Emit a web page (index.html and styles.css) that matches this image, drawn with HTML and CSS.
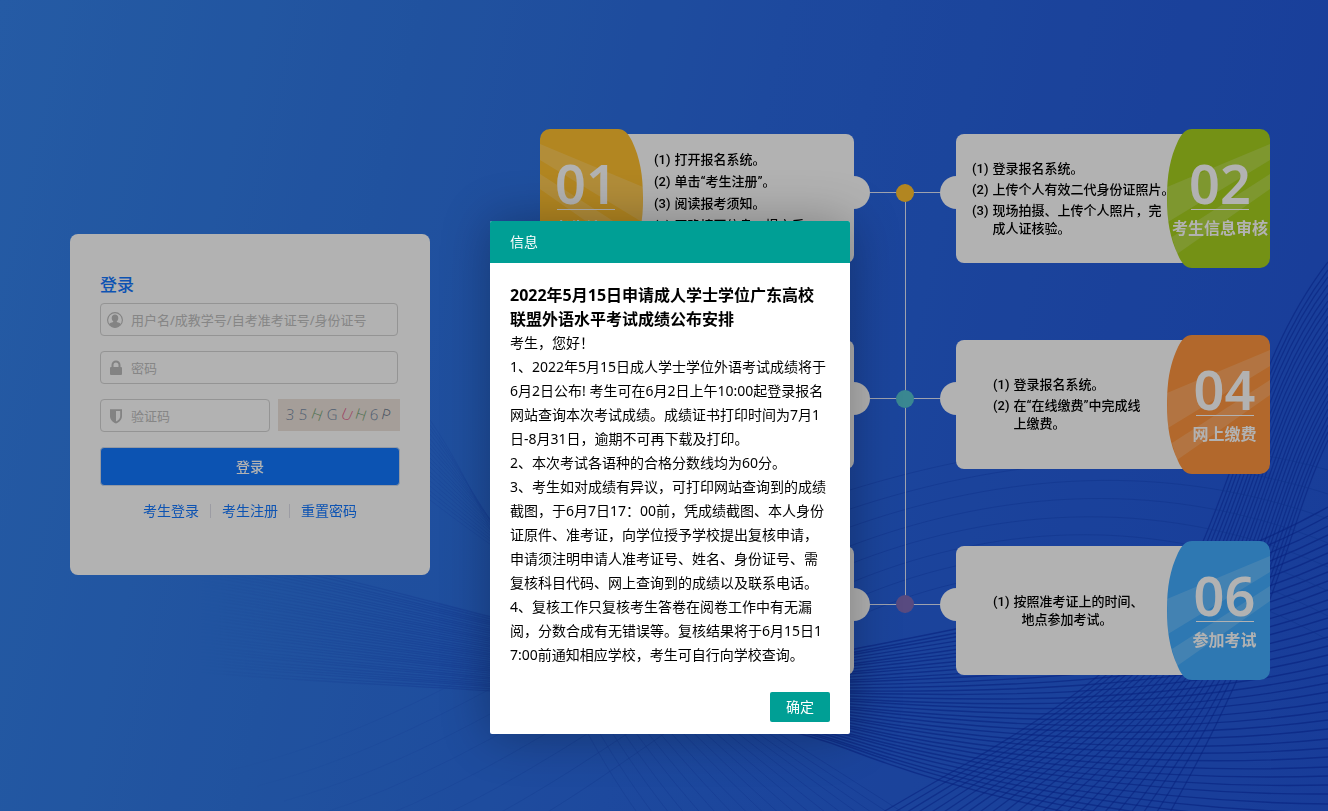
FILE: index.html
```html
<!DOCTYPE html>
<html lang="zh-CN">
<head>
<meta charset="utf-8">
<title>登录</title>
<link rel="stylesheet" href="styles.css">
</head>
<body>
<svg class="waves" id="waves" viewBox="0 0 1328 811" preserveAspectRatio="none" aria-hidden="true"></svg>

<svg class="defs" aria-hidden="true">
  <defs>
    <symbol id="tab" viewBox="0 0 103 139">
      <path fill="currentColor" d="M25 0H93a10 10 0 0 1 10 10V129a10 10 0 0 1-10 10H25C19 139 15 135 11 126C3 109 0 92 0 69C0 46 3 29 11 12C15 4 19 0 25 0Z"/>
      <path fill="#fff" fill-opacity=".17" d="M103 15V31L1 93L0 58ZM103 45V60L10 125L5 108Z"/>
    </symbol>
  </defs>
</svg>

<main class="page">
  <form class="login">
    <h1 class="login-title">登录</h1>
    <div class="field">
      <svg class="icon" viewBox="0 0 16 16" aria-hidden="true"><circle cx="8" cy="8" r="7.4" fill="none" stroke="#bcbcbc" stroke-width="1.1"/><path fill="#bcbcbc" d="M8 2.6c2 0 3.3 1.5 3.3 3.5 0 1.4-.6 2.6-1.5 3.2v.7c1.9.5 3.2 1 3.9 2C12.500 14.300 10.500 15.500 8 15.500S3.500 14.300 2.300 12c.7-1 2-1.500 3.900-2v-.7c-.9-.6-1.500-1.800-1.500-3.200 0-2 1.300-3.500 3.300-3.500Z"/></svg>
      <input type="text" aria-label="用户名" placeholder="用户名/成教学号/自考准考证号/身份证号">
    </div>
    <div class="field">
      <svg class="icon" viewBox="0 0 16 16" aria-hidden="true"><path fill="none" stroke="#bcbcbc" stroke-width="2" d="M5.500 8V5a3.500 3.500 0 0 1 7 0v3"/><rect x="3" y="7" width="12" height="8" rx="1" fill="#bcbcbc"/></svg>
      <input type="password" aria-label="密码" placeholder="密码">
    </div>
    <div class="field-row">
      <div class="field">
        <svg class="icon" viewBox="0 0 16 16" aria-hidden="true"><path fill="#bcbcbc" fill-rule="evenodd" d="M3 1.200H15V8c0 3.500-2.500 6-6 7.600C5.500 14 3 11.500 3 8ZM9 3v10.600c2.500-1.300 4.200-3 4.200-5.600V3Z"/></svg>
        <input type="text" aria-label="验证码" placeholder="验证码">
      </div>
      <svg class="captcha" viewBox="0 0 122 32" role="img" aria-label="35HGUH6P">
        <g text-anchor="middle">
          <text x="12" y="21" fill="#7187a3" transform="rotate(6 12 16)">3</text>
          <text x="25" y="21" fill="#7187a3" transform="rotate(6 25 16)">5</text>
          <text x="39" y="21" fill="#75a578" transform="rotate(20 39 16)">H</text>
          <text x="54" y="21" fill="#7187a3" transform="rotate(2 54 16)">G</text>
          <text x="69" y="21" fill="#e05a8c" transform="rotate(24 69 16)">U</text>
          <text x="83" y="21" fill="#75a578" transform="rotate(18 83 16)">H</text>
          <text x="96" y="21" fill="#7187a3" transform="rotate(4 96 16)">6</text>
          <text x="108" y="21" fill="#65758a" transform="rotate(14 108 16)">P</text>
        </g>
      </svg>
    </div>
    <button class="login-button" type="button">登录</button>
    <nav class="links">
      <a href="#">考生登录</a>
      <a href="#">考生注册</a>
      <a href="#">重置密码</a>
    </nav>
  </form>

  <section class="steps">
    <article class="step step-left amber">
      <div class="tab"><svg class="tab-shape"><use href="#tab"/></svg><strong>01</strong><span>考生注册</span></div>
      <ol>
        <li><b>(1)</b><span>打开报名系统。</span></li>
        <li><b>(2)</b><span>单击“考生注册”。</span></li>
        <li><b>(3)</b><span>阅读报考须知。</span></li>
        <li><b>(4)</b><span>正确填写信息，提交后</span></li>
      </ol>
    </article>
    <svg class="spine" viewBox="0 0 102 551" aria-hidden="true">
      <path d="M51.500 64V475M16 63.500H86M16 269.500H86M16 475.500H86" stroke="#e3e9fa" fill="none"/>
      <circle cx="51" cy="64" r="9" fill="#ffc130"/>
      <circle cx="51" cy="270" r="9" fill="#53c2d0"/>
      <circle cx="51" cy="475" r="9" fill="#7e6bb8"/>
    </svg>
    <article class="step step-right lime">
      <ol>
        <li><b>(1)</b><span>登录报名系统。</span></li>
        <li><b>(2)</b><span>上传个人有效二代身份证照片。</span></li>
        <li><b>(3)</b><span>现场拍摄、上传个人照片，完<br>成人证核验。</span></li>
      </ol>
      <div class="tab"><svg class="tab-shape"><use href="#tab"/></svg><strong>02</strong><span>考生信息审核</span></div>
    </article>
    <article class="step step-left"></article>
    <article class="step step-right orange inset">
      <ol>
        <li><b>(1)</b><span>登录报名系统。</span></li>
        <li><b>(2)</b><span>在“在线缴费”中完成线<br>上缴费。</span></li>
      </ol>
      <div class="tab"><svg class="tab-shape"><use href="#tab"/></svg><strong>04</strong><span>网上缴费</span></div>
    </article>
    <article class="step step-left"></article>
    <article class="step step-right sky inset">
      <ol>
        <li><b>(1)</b><span>按照准考证上的时间、<span class="indent">地点参加考试。</span></span></li>
      </ol>
      <div class="tab"><svg class="tab-shape"><use href="#tab"/></svg><strong>06</strong><span>参加考试</span></div>
    </article>
  </section>
</main>

<div class="shade"></div>
<dialog class="modal" open aria-labelledby="modal-title">
  <header class="modal-head" id="modal-title">信息</header>
  <div class="modal-body">
    <h2>2022年5月15日申请成人学士学位广东高校联盟外语水平考试成绩公布安排</h2>
    <p>考生，您好！</p>
    <p>1、2022年5月15日成人学士学位外语考试成绩将于6月2日公布! 考生可在6月2日上午10:00起登录报名网站查询本次考试成绩。成绩证书打印时间为7月1日-8月31日，逾期不可再下载及打印。</p>
    <p>2、本次考试各语种的合格分数线均为60分。</p>
    <p>3、考生如对成绩有异议，可打印网站查询到的成绩截图，于6月7日17：00前，凭成绩截图、本人身份证原件、准考证，向学位授予学校提出复核申请，申请须注明申请人准考证号、姓名、身份证号、需复核科目代码、网上查询到的成绩以及联系电话。</p>
    <p>4、复核工作只复核考生答卷在阅卷工作中有无漏阅，分数合成有无错误等。复核结果将于6月15日17:00前通知相应学校，考生可自行向学校查询。</p>
  </div>
  <footer class="modal-foot"><button type="button">确定</button></footer>
</dialog>
<script src="waves.js"></script>
</body>
</html>
```

FILE: styles.css
```css
* { box-sizing: border-box; }

body {
  margin: 0;
  min-height: 100vh;
  font-family: "Noto Sans", "Noto Sans CJK SC", sans-serif;
  font-size: 14px;
  line-height: 24px;
  color: #000;
  background: linear-gradient(103deg, #3583ec 0%, #2f76e4 28%, #2a69e2 52%, #2760df 72%, #2357dc 100%);
}

h1, h2, p, ol { margin: 0; padding: 0; }

.waves { position: fixed; inset: 0; width: 100%; height: 100%; }
.waves path { fill: none; }
.defs { position: absolute; width: 0; height: 0; }

.page {
  position: relative;
  min-height: 100vh;
  padding: 0 58px 2px 70px;
  display: flex;
  align-items: center;
  justify-content: space-between;
}

/* Login card */
.login {
  width: 360px;
  padding: 39px 30px 52px;
  border-radius: 8px;
  background: #fff;
}
.login-title {
  margin-bottom: 6px;
  font-size: 17px;
  font-weight: 500;
  line-height: 24px;
  color: #1478ff;
}
.field {
  display: flex;
  align-items: center;
  gap: 8px;
  height: 33px;
  margin: 0 2px 15px 0;
  padding: 0 6px;
  border: 1px solid #d4d4d4;
  border-radius: 4px;
}
.icon { flex: none; width: 16px; height: 16px; }
.field input {
  flex: 1;
  min-width: 0;
  padding: 0;
  border: 0;
  outline: 0;
  background: none;
  font: inherit;
  font-size: 13px;
}
.field input::placeholder { color: #c0c0c0; opacity: 1; }
.field-row { display: flex; gap: 8px; }
.field-row .field { flex: 1; min-width: 0; margin-right: 0; }
.captcha {
  flex: none;
  width: 122px;
  height: 32px;
  background: #ede3db;
  font-family: "Open Sans", sans-serif;
  font-size: 15px;
  font-weight: 300;
}
.login-button {
  display: block;
  width: 100%;
  height: 39px;
  border: 1px solid #d4dcea;
  border-radius: 4px;
  background: #1278ff;
  color: #fff;
  font: inherit;
  font-weight: 500;
}
.links { display: flex; justify-content: center; margin-top: 13px; }
.links a {
  display: flex;
  align-items: center;
  color: #1478ff;
  text-decoration: none;
}
.links a + a::before {
  content: "";
  width: 1px;
  height: 14px;
  margin: 0 11px;
  background: #e0e0ea;
}

/* Registration steps */
.steps {
  display: grid;
  grid-template-columns: 314px 102px 314px;
  grid-auto-rows: 139px;
  row-gap: 67px;
}
.spine { grid-column: 2; grid-row: 1 / 4; width: 102px; height: 551px; }
.step-left { grid-column: 1; }
.step-right { grid-column: 3; }
.step {
  position: relative;
  display: flex;
  align-items: stretch;
}
.step::before {
  content: "";
  position: absolute;
  inset: 5px 0;
  border-radius: 8px;
  background: #fff;
}
.step::after {
  content: "";
  position: absolute;
  top: 47px;
  width: 33px;
  height: 33px;
  border-radius: 50%;
  background: #fff;
}
.step-left::after { right: -16px; }
.step-right::after { left: -16px; }

.step ol {
  position: relative;
  z-index: 3;
  flex: 1;
  min-width: 0;
  display: flex;
  flex-direction: column;
  justify-content: center;
  gap: 3px;
  padding-left: 16px;
  list-style: none;
  font-size: 13px;
  font-weight: 500;
  line-height: 18px;
  white-space: nowrap;
  font-family: Roboto, "Noto Sans CJK SC", sans-serif;
}
.step-left ol { gap: 4px; padding: 0 0 0 11px; margin-bottom: 12px; }
.step.inset ol { padding-left: 37px; }
.step li { display: flex; gap: 4px; }
.step b { font-weight: 500; }
.indent { display: block; padding-left: 8px; }

.tab {
  position: relative;
  z-index: 2;
  flex: none;
  width: 103px;
  padding: 29px 0 0 3px;
  display: flex;
  flex-direction: column;
  align-items: center;
  color: #fff;
}
.inset .tab { padding-left: 12px; }
.step-left .tab { padding: 29px 11px 0 0; }
.tab-shape { position: absolute; inset: 0; width: 103px; height: 139px; }
.step-left .tab-shape { transform: scaleX(-1); }
.tab strong {
  position: relative;
  width: 58px;
  display: flex;
  justify-content: center;
  border-bottom: 1px solid #fff;
  font-size: 54px;
  font-weight: 600;
  line-height: 51px;
}
.tab span {
  position: relative;
  margin-top: 6px;
  font-size: 16px;
  font-weight: 700;
  white-space: nowrap;
}
.amber .tab-shape { color: #ffc130; }
.lime .tab-shape { color: #a6d01f; }
.orange .tab-shape { color: #ff963f; }
.sky .tab-shape { color: #42adff; }

/* Notice dialog */
.shade { position: fixed; inset: 0; z-index: 10; background: rgba(0, 0, 0, .3); }
.modal {
  position: absolute;
  z-index: 11;
  top: 221px;
  left: calc(50% - 174px);
  width: 360px;
  margin: 0;
  padding: 0;
  border: 0;
  border-radius: 2px;
  background: #fff;
  color: #000;
  box-shadow: 1px 1px 50px rgba(0, 0, 0, .3);
}
.modal-head {
  padding: 0 20px;
  border-radius: 2px 2px 0 0;
  background: #009f95;
  color: #fff;
  line-height: 42px;
}
.modal-body { padding: 20px; word-break: break-all; }
.modal-body h2 { font-size: 16px; line-height: 24px; }
.modal-foot { display: flex; justify-content: flex-end; padding: 5px 20px 12px; }
.modal-foot button {
  width: 60px;
  height: 30px;
  padding: 0;
  border: 0;
  border-radius: 2px;
  background: #009f95;
  color: #fff;
  font: inherit;
}
```

FILE: waves.js
```js
// Each band blends a first curve into a last one. Curves are cubic splines:
// start point followed by groups of three control points.
const bands = [
  { n: 24, color: "#0e34b8", opacity: 0.6, width: 1.3,
    from: [1328, 262, 1260, 350, 1245, 450, 1195, 560, 1130, 690, 980, 750, 820, 850],
    to: [1328, 440, 1300, 500, 1290, 550, 1262, 620, 1235, 690, 1200, 760, 1160, 830] },
  { n: 38, color: "#0c30b4", opacity: 0.6, width: 1.4,
    from: [200, 550, 450, 590, 650, 690, 850, 650, 1010, 618, 1180, 590, 1328, 507],
    to: [200, 672, 400, 692, 680, 685, 850, 750, 980, 800, 1150, 835, 1328, 850] },
  { n: 8, color: "#1648c4", opacity: 0.45, width: 1,
    from: [230, 770, 450, 720, 650, 550, 850, 490, 980, 450, 1150, 420, 1328, 470],
    to: [420, 880, 600, 800, 700, 690, 850, 620, 980, 560, 1150, 540, 1328, 640] },
  { n: 18, color: "#1444c4", opacity: 0.4, width: 1,
    from: [430, 420, 500, 520, 550, 700, 650, 830, 660, 840, 670, 850, 680, 860],
    to: [430, 500, 560, 600, 760, 720, 930, 830, 940, 840, 950, 850, 960, 860] }
];

const svg = document.getElementById("waves");
const fade = `<defs><linearGradient id="fade" gradientUnits="userSpaceOnUse" x1="200" x2="850"><stop stop-color="#fff" stop-opacity="0"/><stop offset="1" stop-color="#fff"/></linearGradient><mask id="edge" maskUnits="userSpaceOnUse" x="0" y="0" width="1328" height="811"><rect width="1328" height="811" fill="url(#fade)"/></mask></defs>`;

svg.innerHTML = fade + '<g mask="url(#edge)">' + bands.map(band => {
  let paths = "";
  for (let i = 0; i < band.n; i++) {
    const t = i / (band.n - 1);
    const p = band.from.map((v, k) => Math.round(v + (band.to[k] - v) * t));
    paths += `<path d="M${p[0]} ${p[1]}C${p.slice(2).join(" ")}"/>`;
  }
  return `<g stroke="${band.color}" stroke-width="${band.width}" stroke-opacity="${band.opacity}">${paths}</g>`;
}).join("") + "</g>";
```
